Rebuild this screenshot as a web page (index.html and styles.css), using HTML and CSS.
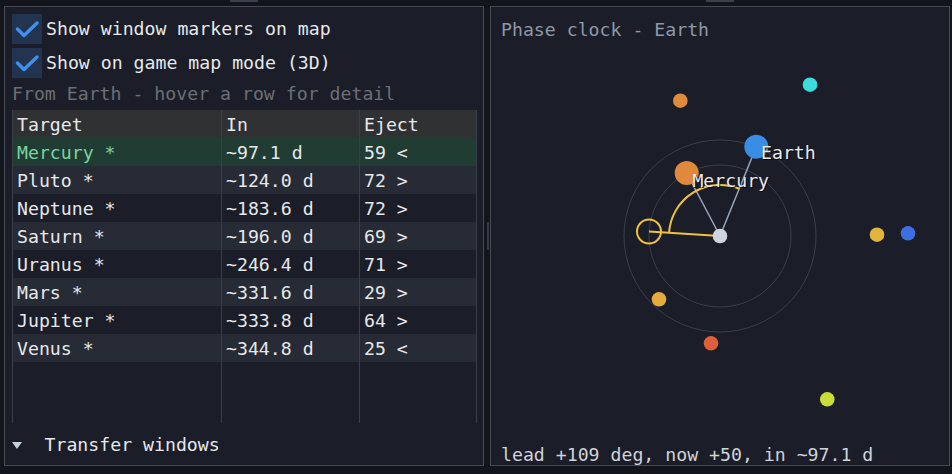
FILE: index.html
```html
<!DOCTYPE html>
<html>
	<head>
		<meta charset="utf-8">
		<title>Transfer windows</title>
		<link rel="stylesheet" href="styles.css">
	</head>
	<body>
		<div class="app">
			<div class="column left">
				<div class="grip"></div>
				<div class="panel windows">
					<label class="check">
						<span class="box"><svg width="30" height="30" viewBox="0 0 30 30"><polyline points="5.5,15 12,21.5 25,9" /></svg></span>
						Show window markers on map
					</label>
					<label class="check">
						<span class="box"><svg width="30" height="30" viewBox="0 0 30 30"><polyline points="5.5,15 12,21.5 25,9" /></svg></span>
						Show on game map mode (3D)
					</label>
					<div class="hint">From Earth - hover a row for detail</div>

					<div class="table">
						<div class="row head"><span>Target</span><span>In</span><span>Eject</span></div>
						<div class="row hot"><span class="name">Mercury *</span><span>~97.1 d</span><span>59 &lt;</span></div>
						<div class="row stripe"><span>Pluto *</span><span>~124.0 d</span><span>72 &gt;</span></div>
						<div class="row"><span>Neptune *</span><span>~183.6 d</span><span>72 &gt;</span></div>
						<div class="row stripe"><span>Saturn *</span><span>~196.0 d</span><span>69 &gt;</span></div>
						<div class="row"><span>Uranus *</span><span>~246.4 d</span><span>71 &gt;</span></div>
						<div class="row stripe"><span>Mars *</span><span>~331.6 d</span><span>29 &gt;</span></div>
						<div class="row"><span>Jupiter *</span><span>~333.8 d</span><span>64 &gt;</span></div>
						<div class="row stripe"><span>Venus *</span><span>~344.8 d</span><span>25 &lt;</span></div>
						<div class="row filler"><span></span><span></span><span></span></div>
					</div>

					<div class="collapse"><span class="arrow"></span>Transfer windows</div>
				</div>
			</div>

			<div class="splitter"><div class="handle"></div></div>

			<div class="column right">
				<div class="grip"></div>
				<div class="panel clock">
					<div class="title">Phase clock - Earth</div>
					<!-- viewBox uses page coordinates -->
					<svg class="dial" width="458" height="404" viewBox="491 41 458 404">
						<circle class="orbit" cx="720" cy="236" r="96" />
						<circle class="orbit" cx="720" cy="236" r="71" />

						<line class="spoke" x1="720" y1="236" x2="756.3" y2="146.7" />
						<line class="spoke" x1="720" y1="236" x2="686.7" y2="173" />

						<path class="lead" d="M 669.1 232.4 A 51 51 0 0 1 739.3 188.8" />
						<line class="lead" x1="720" y1="236" x2="649" y2="231.5" />
						<circle class="lead" cx="649" cy="231.5" r="12" />

						<circle cx="680.3" cy="100.7" r="7.3" fill="#e08b3b" />
						<circle cx="810" cy="84.7" r="7.3" fill="#3ddbdb" />
						<circle cx="877" cy="234.7" r="7.3" fill="#e3b43c" />
						<circle cx="908" cy="233.3" r="7.3" fill="#3c6fe1" />
						<circle cx="659" cy="299.3" r="7.3" fill="#e3ac3c" />
						<circle cx="711" cy="343.3" r="7.3" fill="#df5f3b" />
						<circle cx="827.3" cy="399.3" r="7.3" fill="#c9dc3a" />

						<circle cx="686.7" cy="173" r="12" fill="#e0883b" />
						<circle cx="756.3" cy="146.7" r="12" fill="#3a8de5" />
						<circle cx="720" cy="236" r="7.3" fill="#cfd5df" />

						<text class="shadow" x="762" y="160.3">Earth</text>
						<text class="label" x="761" y="159.3">Earth</text>
						<text class="shadow" x="693.4" y="188.3">Mercury</text>
						<text class="label" x="692.4" y="187.3">Mercury</text>
					</svg>
					<div class="status">lead +109 deg, now +50, in ~97.1 d</div>
				</div>
			</div>
		</div>
	</body>
</html>
```

FILE: styles.css
```css
body{
	margin:0;
	background:#12151b;
	font-family:"DejaVu Sans Mono", monospace;
	font-size:18.2px;
	color:#e6e8eb;
}
.app{
	display:flex;
	height:474px;
	padding:0 2px 0 4px;
	box-sizing:border-box;
}
.column{display:flex;flex-direction:column;}
.left{width:480px;}
.right{width:460px;}
.grip{
	width:28px;height:2px;
	margin:0 auto 4px;
	background:#39404c;
}
.panel{
	height:460px;
	box-sizing:border-box;
	border:1px solid #444954;
	background:#1b1e28;
	display:flex;
	flex-direction:column;
}
.splitter{
	width:6px;
	height:466px;
	padding-top:6px;
	box-sizing:border-box;
	display:flex;
	align-items:center;
}
.handle{width:2px;height:28px;margin-left:3px;background:#353b48;}

/* left panel */
.windows{padding:7px 0 9px 7px;}
.check{
	display:flex;
	align-items:center;
	gap:4px;
	height:30px;
	line-height:22px;
}
.check + .check{margin-top:4px;}
.box{width:30px;height:30px;background:#22344f;}
.box svg{display:block;}
.box polyline{fill:none;stroke:#3d8ff0;stroke-width:3.5;stroke-linecap:round;stroke-linejoin:round;}
.hint{color:#6c6f76;line-height:22px;margin-top:5px;}

.table{
	margin-top:5px;
	width:465px;
	height:313px;
	box-sizing:border-box;
	border-left:1px solid #3a3f4a;
	border-right:1px solid #3a3f4a;
	display:flex;
	flex-direction:column;
}
.row{
	display:grid;
	grid-template-columns:209px 138px 1fr;
	height:28px;
	line-height:29px;
	white-space:pre;
}
.row span{padding-left:4px;border-right:1px solid #3a3f4a;}
.row span:last-child{border-right:none;}
.head{background:#303133;}
.hot{background:#213c33;}
.hot .name{color:#7dd3a0;}
.stripe{background:#272b35;}
.filler{flex:1;height:auto;}

.collapse{
	display:flex;
	align-items:center;
	margin-top:11px;
	line-height:22px;
}
.arrow{
	width:0;height:0;
	border-left:5.5px solid transparent;
	border-right:5.5px solid transparent;
	border-top:7px solid #c8d0de;
	margin-right:22.5px;
}

/* right panel */
.title{color:#8e99aa;line-height:22px;margin-top:12px;padding-left:10px;}
.dial{display:block;width:458px;height:404px;}
.status{line-height:20px;padding-left:10px;color:#d0d3d9;}

.orbit{fill:none;stroke:#3a3f4a;stroke-width:1;}
.spoke{stroke:#9aa6b8;stroke-width:1.5;}
.lead{fill:none;stroke:#f0c23e;stroke-width:2;}
.label,.shadow{font-family:"DejaVu Sans Mono", monospace;font-size:18.2px;}
.label{fill:#e8eaee;}
.shadow{fill:#000000;opacity:0.8;}
```
